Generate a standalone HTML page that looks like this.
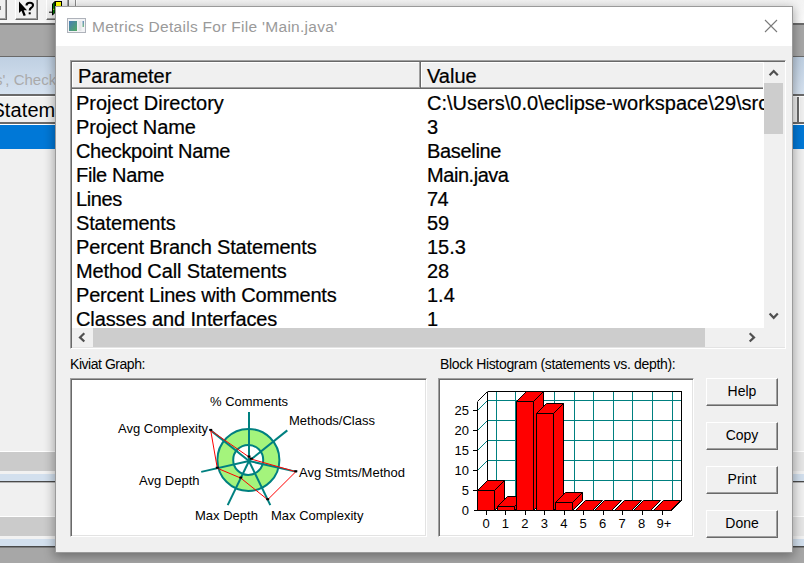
<!DOCTYPE html>
<html>
<head>
<meta charset="utf-8">
<title>Metrics Details</title>
<style>
html,body{margin:0;padding:0;}
body{width:804px;height:563px;overflow:hidden;position:relative;background:#f0f0f0;font-family:"Liberation Sans",sans-serif;color:#000;}
.a{position:absolute;}
.t{position:absolute;white-space:nowrap;line-height:1;}
/* ---------- background app ---------- */
#bg{left:0;top:0;width:804px;height:563px;background:#f0f0f0;overflow:hidden;}
/* ---------- dialog ---------- */
#dlg{left:55px;top:6px;width:738px;height:547px;background:#f0f0f0;border:1px solid #9a9a9a;box-sizing:border-box;
 box-shadow:0 3px 10px 1px rgba(0,0,0,.33);}
#title{left:0;top:0;width:734px;height:39px;background:#fff;}
.row{position:absolute;left:0;height:24px;font-size:20px;line-height:24px;white-space:nowrap;-webkit-text-stroke:0.22px #000;}
.btn{position:absolute;left:706px;width:72px;height:28px;box-sizing:border-box;background:#f0f0f0;
 border-top:1px solid #fff;border-left:1px solid #fff;border-right:1px solid #696969;border-bottom:1px solid #696969;
 font-size:14px;text-align:center;}
.btn i{position:absolute;left:0;top:0;right:0;bottom:0;border-right:1px solid #a0a0a0;border-bottom:1px solid #a0a0a0;}
.btn span{position:absolute;left:0;right:0;top:3.5px;line-height:17px;}
.k{font-size:13px;}
.h{font-size:13px;}
.sunk{position:absolute;box-sizing:border-box;background:#fff;border-top:1px solid #a0a0a0;border-left:1px solid #a0a0a0;border-right:1px solid #fff;border-bottom:1px solid #fff;box-shadow:inset 1px 1px 0 #696969,inset -1px -1px 0 #e3e3e3;}
</style>
</head>
<body>
<div id="bg" class="a">
  <!-- toolbar -->
  <div class="a" style="left:0;top:0;width:804px;height:23px;background:#f2f2f2;"></div>
  <div class="a" style="left:57px;top:0;width:747px;height:23px;background:linear-gradient(#f3f3f3,#fcfcfc);"></div>
  <div class="a" style="left:-10px;top:-6px;width:17px;height:26px;box-sizing:border-box;background:#f0f0f0;border-right:1px solid #696969;border-bottom:1px solid #696969;box-shadow:inset -1px -1px 0 #a0a0a0;"></div>
  <div class="a" style="left:15px;top:-6px;width:23px;height:26px;box-sizing:border-box;background:#f0f0f0;border-left:1px solid #fff;border-right:1px solid #696969;border-bottom:1px solid #696969;box-shadow:inset -1px -1px 0 #a0a0a0;"></div>
  <div class="a" style="left:46px;top:-6px;width:23px;height:26px;box-sizing:border-box;background:#f0f0f0;border-left:1px solid #fff;border-right:1px solid #696969;border-bottom:1px solid #696969;box-shadow:inset -1px -1px 0 #a0a0a0;"></div>
  <div class="a" style="left:0;top:6px;width:1px;height:4px;background:#808080;"></div>
  <svg class="a" style="left:15px;top:0" width="24" height="20" viewBox="0 0 24 20">
    <path d="M4 1.500 L4 13 L6.500 10.800 L8.600 16 L10.800 15.200 L8.700 10.300 L12 10.300 Z" fill="#000"/>
    <path d="M11.500 5.500 Q11.500 2.800 14.800 2.800 Q18 2.800 18 5.300 Q18 7 16 8 Q14.700 8.800 14.700 10.400" stroke="#000" stroke-width="2.100" fill="none"/>
    <rect x="13.700" y="12.300" width="2" height="2" fill="#000"/>
  </svg>
  <svg class="a" style="left:46px;top:0" width="20" height="20" viewBox="0 0 20 20">
    <path d="M6.500 3.800 L9 1.600 L9 12.600 L6.500 15 Z" fill="#008000" stroke="#000" stroke-width="1"/>
    <rect x="9.500" y="1.500" width="6" height="6" fill="#ffff00" stroke="#000" stroke-width="1"/>
    <path d="M3 12.200 L6.500 12.200" stroke="#000" stroke-width="1"/>
    <rect x="7.200" y="8.800" width="1" height="1" fill="#ffff00"/>
  </svg>
  <div class="a" style="left:75px;top:0;width:1px;height:7px;background:#8a8a8a;"></div>
  <div class="a" style="left:76px;top:0;width:1px;height:7px;background:#fff;"></div>
  <div class="a" style="left:0;top:20px;width:804px;height:3px;background:#f6f6f6;"></div>
  <!-- grey strip -->
  <div class="a" style="left:0;top:23px;width:804px;height:2px;background:#6a6a6a;"></div>
  <div class="a" style="left:0;top:25px;width:804px;height:31px;background:#a7a7a7;"></div>
  <div class="a" style="left:0;top:56px;width:804px;height:1px;background:#6a6a6a;"></div>
  <!-- light blue caption -->
  <div class="a" style="left:0;top:57px;width:804px;height:37px;background:linear-gradient(#bfd0e2,#d6e2f0);"></div>
  <div class="t" style="left:-5px;top:71.7px;font-size:15px;color:#aaaaaa;">s', Check</div>
  <div class="a" style="left:0;top:94px;width:804px;height:2px;background:#6a6a6a;"></div>
  <!-- header -->
  <div class="a" style="left:0;top:96px;width:804px;height:1px;background:#fff;"></div>
  <div class="a" style="left:0;top:97px;width:804px;height:25px;background:#f0f0f0;"></div>
  <div class="t" style="left:-8.6px;top:99.6px;font-size:20px;letter-spacing:0.1px;">Stateme</div>
  <div class="a" style="left:0;top:122px;width:804px;height:2px;background:#6a6a6a;"></div>
  <div class="a" style="left:0;top:124px;width:804px;height:1px;background:#fff;"></div>
  <!-- selection -->
  <div class="a" style="left:0;top:125px;width:804px;height:24px;background:#0078d7;"></div>
  <!-- bottom bands -->
  <div class="a" style="left:0;top:451px;width:804px;height:1px;background:#fff;"></div>
  <div class="a" style="left:0;top:452px;width:804px;height:19px;background:#cbcbcb;"></div>
  <div class="a" style="left:0;top:471px;width:804px;height:3px;background:#f2f2f2;"></div>
  <div class="a" style="left:0;top:474px;width:804px;height:7px;background:#d3e0ee;"></div>
  <div class="a" style="left:0;top:481px;width:804px;height:1px;background:#4a4a4a;"></div><div class="a" style="left:0;top:482px;width:804px;height:1px;background:#b4b4b4;"></div>
  <div class="a" style="left:0;top:516px;width:804px;height:1px;background:#fff;"></div>
  <div class="a" style="left:0;top:517px;width:804px;height:19px;background:#cbcbcb;"></div>
  <div class="a" style="left:0;top:536px;width:804px;height:3px;background:#f2f2f2;"></div>
  <div class="a" style="left:0;top:539px;width:804px;height:7px;background:#d3e0ee;"></div>
  <div class="a" style="left:0;top:546px;width:804px;height:1px;background:#4a4a4a;"></div><div class="a" style="left:0;top:547px;width:804px;height:1px;background:#7c7c7c;"></div>
  <div class="a" style="left:0;top:548px;width:804px;height:15px;background:#a7a7a7;"></div>
  <!-- right-of-dialog overrides -->
  <div class="a" style="left:792px;top:452px;width:12px;height:19px;background:#e6e6e6;"></div>
  <div class="a" style="left:792px;top:517px;width:12px;height:19px;background:#e6e6e6;"></div>
  <div class="a" style="left:797px;top:97px;width:2px;height:25px;background:#6a6a6a;"></div>
  <div class="a" style="left:799px;top:97px;width:1px;height:25px;background:#fff;"></div>
</div>


<div id="dlg" class="a"></div>
<div class="a" style="left:56px;top:7px;width:736px;height:39px;background:#fff;"></div>
<!-- title icon -->
<svg class="a" style="left:67px;top:18px" width="20" height="16" viewBox="0 0 20 16">
 <defs><linearGradient id="gi" x1="0" y1="0" x2="1" y2="1"><stop offset="0" stop-color="#4a7cb8"/><stop offset="1" stop-color="#52aa62"/></linearGradient>
 <linearGradient id="gj" x1="0" y1="0" x2="0" y2="1"><stop offset="0" stop-color="#4472b4"/><stop offset="1" stop-color="#5ab06a"/></linearGradient></defs>
 <rect x="0.5" y="0.5" width="18" height="14" fill="#f2f3f5" stroke="#aeb2ba"/>
 <rect x="2" y="3" width="8" height="10" fill="url(#gi)"/>
 <rect x="11.5" y="3" width="3" height="10" fill="#e4e5e7"/>
 <rect x="15.600" y="3" width="1.200" height="6" fill="url(#gj)"/>
</svg>
<div class="t" id="ttl" style="left:92px;top:18.9px;font-size:15.5px;letter-spacing:0.29px;color:#9a9a9a;">Metrics Details For File 'Main.java'</div>
<svg class="a" style="left:764px;top:19px" width="14" height="14" viewBox="0 0 14 14"><path d="M1 1 L13 13 M13 1 L1 13" stroke="#7a7a7a" stroke-width="1.1" fill="none"/></svg>

<!-- list view -->
<div class="sunk" style="left:70px;top:60px;width:716px;height:289px;"></div>
<!-- header -->
<div class="a" style="left:72px;top:62px;width:692px;height:25px;background:#f0f0f0;border-top:1px solid #fff;border-left:1px solid #fff;box-sizing:border-box;"></div>
<div class="a" style="left:72px;top:87px;width:691px;height:1px;background:#a0a0a0;"></div><div class="a" style="left:72px;top:88px;width:691px;height:1px;background:#696969;"></div>
<div class="a" style="left:419px;top:62px;width:1px;height:26px;background:#a0a0a0;"></div><div class="a" style="left:420px;top:62px;width:1px;height:26px;background:#696969;"></div>
<div class="a" style="left:421px;top:63px;width:1px;height:24px;background:#fff;"></div>
<div class="row" style="left:78px;top:64px;">Parameter</div>
<div class="row" style="left:427px;top:64px;">Value</div>
<div class="a" style="left:72px;top:89px;width:692px;height:239px;overflow:hidden;background:#fff;">
<div class="a" style="left:-72px;top:-89px;">
<div class="row" style="left:76px;top:91px;">Project Directory</div><div class="row" style="left:427px;top:91px;">C:\Users\0.0\eclipse-workspace\29\src</div>
<div class="row" style="left:76px;top:115px;letter-spacing:-0.12px;">Project Name</div><div class="row" style="left:427px;top:115px;">3</div>
<div class="row" style="left:76px;top:139px;letter-spacing:-0.32px;">Checkpoint Name</div><div class="row" style="left:427px;top:139px;letter-spacing:-0.33px;">Baseline</div>
<div class="row" style="left:76px;top:163px;letter-spacing:-0.34px;">File Name</div><div class="row" style="left:427px;top:163px;letter-spacing:-0.45px;">Main.java</div>
<div class="row" style="left:76px;top:187px;letter-spacing:-0.37px;">Lines</div><div class="row" style="left:427px;top:187px;letter-spacing:-0.5px;">74</div>
<div class="row" style="left:76px;top:211px;letter-spacing:-0.16px;">Statements</div><div class="row" style="left:427px;top:211px;">59</div>
<div class="row" style="left:76px;top:235px;letter-spacing:-0.16px;">Percent Branch Statements</div><div class="row" style="left:427px;top:235px;">15.3</div>
<div class="row" style="left:76px;top:259px;letter-spacing:-0.13px;">Method Call Statements</div><div class="row" style="left:427px;top:259px;">28</div>
<div class="row" style="left:76px;top:283px;letter-spacing:-0.19px;">Percent Lines with Comments</div><div class="row" style="left:427px;top:283px;">1.4</div>
<div class="row" style="left:76px;top:307px;letter-spacing:-0.1px;">Classes and Interfaces</div><div class="row" style="left:427px;top:307px;">1</div>

</div></div>
<!-- vertical scrollbar -->
<div class="a" style="left:764px;top:62px;width:21px;height:266px;background:#f0f0f0;"></div>
<div class="a" style="left:763px;top:63px;width:1px;height:26px;background:#fff;"></div>
<div class="a" style="left:764px;top:83px;width:19px;height:51px;background:#cdcdcd;"></div>
<svg class="a" style="left:764px;top:62px" width="21" height="266" viewBox="0 0 21 266"><path d="M5.600 13.300 L9.700 9 L13.800 13.300" stroke="#505050" stroke-width="2.200" fill="none"/><path d="M5.600 251.500 L9.700 255.800 L13.800 251.500" stroke="#505050" stroke-width="2.200" fill="none"/></svg>
<!-- horizontal scrollbar -->
<div class="a" style="left:72px;top:328px;width:713px;height:19px;background:#f0f0f0;"></div>
<div class="a" style="left:93px;top:328px;width:612px;height:19px;background:#cdcdcd;"></div>
<svg class="a" style="left:72px;top:328px" width="692" height="19" viewBox="0 0 692 19"><path d="M12.300 5.300 L8 9.400 L12.300 13.500" stroke="#505050" stroke-width="2.200" fill="none"/><path d="M677.700 5.300 L682 9.400 L677.700 13.500" stroke="#505050" stroke-width="2.200" fill="none"/></svg>

<!-- labels -->
<div class="t" style="left:70px;top:357px;font-size:14px;letter-spacing:-0.46px;">Kiviat Graph:</div>
<div class="t" style="left:440px;top:357px;font-size:14px;letter-spacing:-0.33px;">Block Histogram (statements vs. depth):</div>
<!-- kiviat panel -->
<div class="sunk" style="left:70px;top:378px;width:357px;height:159px;"></div>
<!-- histogram panel -->
<div class="sunk" style="left:438px;top:378px;width:256px;height:159px;"></div>
<!--KIV--><svg class="a" style="left:0;top:0" width="804" height="563" viewBox="0 0 804 563">
<circle cx="248.4" cy="459.9" r="31" fill="#a4f47c"/>
<circle cx="248.2" cy="459.9" r="15" fill="#fff"/>
<g stroke="#008080" stroke-width="2" fill="none">
<circle cx="248.4" cy="459.9" r="31"/><circle cx="248.2" cy="459.9" r="15"/>
<line x1="249" y1="461" x2="249.0" y2="412.0"/><line x1="249" y1="461" x2="287.3" y2="430.4"/><line x1="249" y1="461" x2="296.8" y2="471.9"/><line x1="249" y1="461" x2="270.3" y2="505.1"/><line x1="249" y1="461" x2="227.7" y2="505.1"/><line x1="249" y1="461" x2="201.2" y2="471.9"/><line x1="249" y1="461" x2="210.7" y2="430.4"/>
</g>
<polygon points="249.0,457.0 251.3,459.1 295.8,471.7 267.7,499.7 240.8,478.1 217.3,468.2 210.7,430.4" fill="none" stroke="#f00" stroke-width="1"/>
<rect x="247.5" y="455.5" width="3" height="2" fill="#000"/><rect x="249.8" y="457.6" width="3" height="2" fill="#000"/><rect x="294.3" y="470.2" width="3" height="2" fill="#000"/><rect x="266.2" y="498.2" width="3" height="2" fill="#000"/><rect x="239.3" y="476.6" width="3" height="2" fill="#000"/><rect x="215.8" y="466.7" width="3" height="2" fill="#000"/><rect x="209.2" y="428.9" width="3" height="2" fill="#000"/>
</svg><!--/KIV-->
<div class="t k" style="left:210px;top:395px;">% Comments</div>
<div class="t k" style="left:289px;top:414px;">Methods/Class</div>
<div class="t k" style="left:118px;top:422px;">Avg Complexity</div>
<div class="t k" style="left:299px;top:466px;">Avg Stmts/Method</div>
<div class="t k" style="left:139px;top:474px;">Avg Depth</div>
<div class="t k" style="left:195px;top:509px;">Max Depth</div>
<div class="t k" style="left:271px;top:509px;">Max Complexity</div>
<!--HIST--><svg class="a" style="left:0;top:0" width="804" height="563" viewBox="0 0 804 563"><g stroke="#008080" stroke-width="1" shape-rendering="crispEdges"><line x1="487.5" y1="480.5" x2="681.5" y2="480.5"/><line x1="487.5" y1="460.5" x2="681.5" y2="460.5"/><line x1="487.5" y1="440.5" x2="681.5" y2="440.5"/><line x1="487.5" y1="420.5" x2="681.5" y2="420.5"/><line x1="487.5" y1="400.5" x2="681.5" y2="400.5"/><line x1="496.5" y1="391.5" x2="496.5" y2="500.5"/><line x1="515.5" y1="391.5" x2="515.5" y2="500.5"/><line x1="535.5" y1="391.5" x2="535.5" y2="500.5"/><line x1="554.5" y1="391.5" x2="554.5" y2="500.5"/><line x1="574.5" y1="391.5" x2="574.5" y2="500.5"/><line x1="593.5" y1="391.5" x2="593.5" y2="500.5"/><line x1="613.5" y1="391.5" x2="613.5" y2="500.5"/><line x1="632.5" y1="391.5" x2="632.5" y2="500.5"/><line x1="652.5" y1="391.5" x2="652.5" y2="500.5"/><line x1="672.5" y1="391.5" x2="672.5" y2="500.5"/></g>
<g stroke="#008080" stroke-width="1"><line x1="477.5" y1="490.5" x2="487.5" y2="480.5"/><line x1="477.5" y1="470.5" x2="487.5" y2="460.5"/><line x1="477.5" y1="450.5" x2="487.5" y2="440.5"/><line x1="477.5" y1="430.5" x2="487.5" y2="420.5"/><line x1="477.5" y1="410.5" x2="487.5" y2="400.5"/></g>
<g stroke="#000" stroke-width="1" fill="none" shape-rendering="crispEdges"><path d="M477.5 510.5 L477.5 401.5 M487.5 391.5 L681.5 391.5 L681.5 500.5 M487.5 391.5 L487.5 500.5 M473.5 510.5 L671.5 510.5"/></g>
<g stroke="#000" stroke-width="1" fill="none"><path d="M477.5 401.5 L487.5 391.5 M671.5 510.5 L681.5 500.5"/></g>
<g stroke="#000" stroke-width="1" shape-rendering="crispEdges"><line x1="473.0" y1="490.5" x2="477.5" y2="490.5"/><line x1="473.0" y1="470.5" x2="477.5" y2="470.5"/><line x1="473.0" y1="450.5" x2="477.5" y2="450.5"/><line x1="473.0" y1="430.5" x2="477.5" y2="430.5"/><line x1="473.0" y1="410.5" x2="477.5" y2="410.5"/><line x1="486.5" y1="510.5" x2="486.5" y2="515.0"/><line x1="505.5" y1="510.5" x2="505.5" y2="515.0"/><line x1="525.5" y1="510.5" x2="525.5" y2="515.0"/><line x1="544.5" y1="510.5" x2="544.5" y2="515.0"/><line x1="564.5" y1="510.5" x2="564.5" y2="515.0"/><line x1="583.5" y1="510.5" x2="583.5" y2="515.0"/><line x1="603.5" y1="510.5" x2="603.5" y2="515.0"/><line x1="622.5" y1="510.5" x2="622.5" y2="515.0"/><line x1="642.5" y1="510.5" x2="642.5" y2="515.0"/><line x1="662.5" y1="510.5" x2="662.5" y2="515.0"/></g>
<g fill="#f00" stroke="#000" stroke-width="1" stroke-linejoin="miter"><path d="M494.5 510.5 L504.5 500.5 L504.5 480.5 L494.5 490.5 Z"/><path d="M477.5 510.5 L477.5 490.5 L494.5 490.5 L494.5 510.5 Z"/><path d="M477.5 490.5 L487.5 480.5 L504.5 480.5 L494.5 490.5 Z"/><path d="M514.5 510.5 L524.5 500.5 L524.5 496.5 L514.5 506.5 Z"/><path d="M497.5 510.5 L497.5 506.5 L514.5 506.5 L514.5 510.5 Z"/><path d="M497.5 506.5 L507.5 496.5 L524.5 496.5 L514.5 506.5 Z"/><path d="M533.5 510.5 L543.5 500.5 L543.5 391.5 L533.5 401.5 Z"/><path d="M516.5 510.5 L516.5 401.5 L533.5 401.5 L533.5 510.5 Z"/><path d="M516.5 401.5 L526.5 391.5 L543.5 391.5 L533.5 401.5 Z"/><path d="M553.5 510.5 L563.5 500.5 L563.5 403.5 L553.5 413.5 Z"/><path d="M536.5 510.5 L536.5 413.5 L553.5 413.5 L553.5 510.5 Z"/><path d="M536.5 413.5 L546.5 403.5 L563.5 403.5 L553.5 413.5 Z"/><path d="M572.5 510.5 L582.5 500.5 L582.5 492.5 L572.5 502.5 Z"/><path d="M555.5 510.5 L555.5 502.5 L572.5 502.5 L572.5 510.5 Z"/><path d="M555.5 502.5 L565.5 492.5 L582.5 492.5 L572.5 502.5 Z"/><path d="M575.5 510.5 L585.5 500.5 L602.5 500.5 L592.5 510.5 Z"/><path d="M594.5 510.5 L604.5 500.5 L621.5 500.5 L611.5 510.5 Z"/><path d="M614.5 510.5 L624.5 500.5 L641.5 500.5 L631.5 510.5 Z"/><path d="M633.5 510.5 L643.5 500.5 L660.5 500.5 L650.5 510.5 Z"/><path d="M653.5 510.5 L663.5 500.5 L680.5 500.5 L670.5 510.5 Z"/></g></svg><!--/HIST-->
<div class="t h" style="left:440px;width:29px;text-align:right;top:404px;">25</div>
<div class="t h" style="left:440px;width:29px;text-align:right;top:424px;">20</div>
<div class="t h" style="left:440px;width:29px;text-align:right;top:444px;">15</div>
<div class="t h" style="left:440px;width:29px;text-align:right;top:464px;">10</div>
<div class="t h" style="left:440px;width:29px;text-align:right;top:484px;">5</div>
<div class="t h" style="left:440px;width:29px;text-align:right;top:504px;">0</div>
<div class="t h" style="left:471.0px;width:30px;text-align:center;top:517px;">0</div>
<div class="t h" style="left:490.4px;width:30px;text-align:center;top:517px;">1</div>
<div class="t h" style="left:509.9px;width:30px;text-align:center;top:517px;">2</div>
<div class="t h" style="left:529.4px;width:30px;text-align:center;top:517px;">3</div>
<div class="t h" style="left:548.8px;width:30px;text-align:center;top:517px;">4</div>
<div class="t h" style="left:568.2px;width:30px;text-align:center;top:517px;">5</div>
<div class="t h" style="left:587.7px;width:30px;text-align:center;top:517px;">6</div>
<div class="t h" style="left:607.1px;width:30px;text-align:center;top:517px;">7</div>
<div class="t h" style="left:626.6px;width:30px;text-align:center;top:517px;">8</div>
<div class="t h" style="left:649.0px;width:30px;text-align:center;top:517px;">9+</div>
<div class="btn" style="top:378px;"><i></i><span>Help</span></div>
<div class="btn" style="top:422px;"><i></i><span>Copy</span></div>
<div class="btn" style="top:466px;"><i></i><span>Print</span></div>
<div class="btn" style="top:510px;"><i></i><span>Done</span></div>
</body>
</html>
